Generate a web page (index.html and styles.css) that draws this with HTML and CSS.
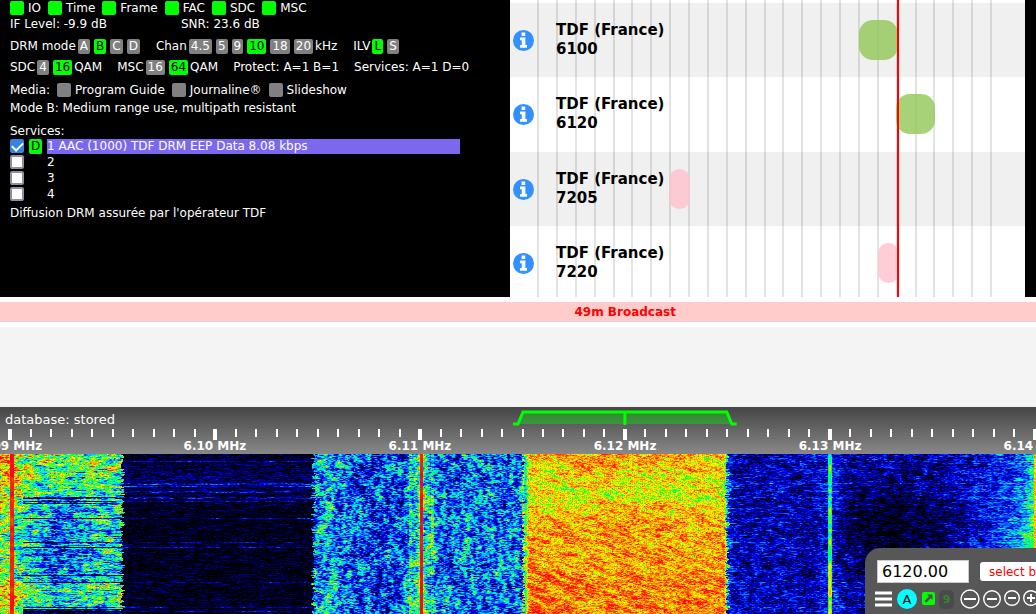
FILE: index.html
```html
<!DOCTYPE html>
<html lang="en">
<head>
<meta charset="utf-8">
<title>DRM receiver</title>
<link rel="stylesheet" href="styles.css">
</head>
<body>
<main class="top">
  <section class="drm" aria-label="DRM decoder">
    <div class="line leds">
      <span class="led on">IO</span><span class="led on">Time</span><span class="led on">Frame</span><span class="led on">FAC</span><span class="led on">SDC</span><span class="led on">MSC</span>
    </div>
    <div class="line levels"><span class="if">IF Level: -9.9 dB</span><span>SNR: 23.6 dB</span></div>
    <div class="line modes">
      <div class="group"><span>DRM mode</span><b class="chip">A</b><b class="chip on">B</b><b class="chip">C</b><b class="chip">D</b></div>
      <div class="group"><span>Chan</span><b class="chip">4.5</b><b class="chip">5</b><b class="chip">9</b><b class="chip on">10</b><b class="chip">18</b><b class="chip">20</b><span class="unit">kHz</span></div>
      <div class="group"><span>ILV</span><b class="chip on">L</b><b class="chip">S</b></div>
    </div>
    <div class="line qam">
      <div class="group"><span>SDC</span><b class="chip">4</b><b class="chip on">16</b><span class="unit">QAM</span></div>
      <div class="group"><span>MSC</span><b class="chip">16</b><b class="chip on">64</b><span class="unit">QAM</span></div>
      <span>Protect: A=1 B=1</span>
      <span>Services: A=1 D=0</span>
    </div>
    <div class="line media"><span>Media:</span><span class="led">Program Guide</span><span class="led">Journaline®</span><span class="led">Slideshow</span></div>
    <div class="line desc">Mode B: Medium range use, multipath resistant</div>
    <div class="line heading">Services:</div>
    <div class="services">
      <label class="service active"><input class="tick" type="checkbox" checked><b class="chip on">D</b><span class="name">1 AAC (1000) TDF DRM EEP Data 8.08 kbps</span></label>
      <label class="service"><input class="tick" type="checkbox"><span class="name">2</span></label>
      <label class="service"><input class="tick" type="checkbox"><span class="name">3</span></label>
      <label class="service"><input class="tick" type="checkbox"><span class="name">4</span></label>
    </div>
    <div class="line message">Diffusion DRM assurée par l'opérateur TDF</div>
  </section>

  <section class="schedule" aria-label="Schedule">
    <svg class="defs" width="0" height="0" aria-hidden="true">
      <symbol id="info" viewBox="0 0 21 21">
        <circle cx="10.500" cy="10.500" r="10.500" fill="#3391ff"/>
        <path fill="#fff" d="M8.600 2.500h3.600v3.400H8.600zM7 7.400h5.400v7.600H14v2.800H7V15h1.800v-4.800H7z"/>
      </symbol>
    </svg>
    <article class="row">
      <div class="track"><span class="slot verified" style="left:70.700%;width:8.700%"></span></div>
      <svg class="info"><use href="#info"/></svg>
      <div class="station">TDF (France)<br>6100</div>
    </article>
    <article class="row">
      <div class="track"><span class="slot verified" style="left:79%;width:8.500%"></span></div>
      <svg class="info"><use href="#info"/></svg>
      <div class="station">TDF (France)<br>6120</div>
    </article>
    <article class="row">
      <div class="track"><span class="slot" style="left:29%;width:4.600%"></span></div>
      <svg class="info"><use href="#info"/></svg>
      <div class="station">TDF (France)<br>7205</div>
    </article>
    <article class="row">
      <div class="track"><span class="slot" style="left:74.900%;width:4.600%"></span></div>
      <svg class="info"><use href="#info"/></svg>
      <div class="station">TDF (France)<br>7220</div>
    </article>
    <div class="hours" aria-hidden="true"><i></i><i></i><i></i><i></i><i></i><i></i><i></i><i></i><i></i><i></i><i></i><i></i><i></i><i></i><i></i><i></i><i></i><i></i><i></i><i></i><i></i><i></i><i></i><i></i><i></i></div>
    <div class="track now-track"><span class="now" style="left:79.200%"></span></div>
  </section>
</main>

<div class="band">49m Broadcast</div>
<div class="labels"></div>

<section class="scale" aria-label="Frequency scale">
  <div class="database">database: stored</div>
  <svg class="ticks" id="ticks" aria-hidden="true"></svg>
  <svg class="passband" viewBox="0 0 224 18" preserveAspectRatio="none" aria-hidden="true">
    <path d="M5 15L11 3H213L219 15z" fill="#00ff00" fill-opacity=".35"/>
    <path d="M0 15H5L10 3H214L219 15H224M112 3V16" fill="none" stroke="#00ff00" stroke-width="3"/>
  </svg>
  <span class="mhz" style="left:1.060%">6.09 MHz</span>
  <span class="mhz" style="left:20.750%">6.10 MHz</span>
  <span class="mhz" style="left:40.540%">6.11 MHz</span>
  <span class="mhz" style="left:60.330%">6.12 MHz</span>
  <span class="mhz" style="left:80.120%">6.13 MHz</span>
  <span class="mhz" style="left:99.900%">6.14 MHz</span>
</section>

<section class="fall">
  <canvas class="waterfall" id="waterfall"></canvas>
  <form class="control">
    <div class="tune">
      <input class="freq" type="text" value="6120.00" aria-label="Frequency">
      <select class="select" aria-label="Band"><option>select band</option></select>
    </div>
    <div class="tools">
      <button class="tool" type="button" aria-label="Menu"><svg width="18" height="16"><path d="M0 2h17M0 8h17M0 14h17" stroke="#fff" stroke-width="3"/></svg></button>
      <button class="tool auto" type="button">A</button>
      <button class="tool" type="button" aria-label="Open"><svg width="14" height="14"><rect x="1" width="13" height="13" rx="2" fill="#0f0"/><path d="M6 2.500h5.500V8L9.700 6.300l-4.400 4.400-1.800-1.800 4.400-4.400z" fill="#505050"/></svg></button>
      <button class="tool nine" type="button">9</button>
      <div class="zooms">
        <button class="tool zoom" type="button" aria-label="Zoom out fully"><svg width="20" height="20" viewBox="0 0 20 20"><circle cx="10" cy="10" r="9"/><path d="M4 10h12"/></svg></button>
        <button class="tool zoom" type="button" aria-label="Zoom to band"><svg width="18" height="18" viewBox="0 0 18 18"><circle cx="9" cy="9" r="8.300"/><path d="M4 9h10"/></svg></button>
        <button class="tool zoom" type="button" aria-label="Zoom out"><svg width="16" height="18" viewBox="0 0 16 18"><circle cx="8" cy="8" r="7.300"/><path d="M4 8h8"/></svg></button>
        <button class="tool zoom" type="button" aria-label="Zoom in"><svg width="16" height="18" viewBox="0 0 16 18"><circle cx="8" cy="8" r="7.300"/><path d="M4 8h8M8 4v8"/></svg></button>
      </div>
    </div>
  </form>
</section>
<script src="script.js"></script>
</body>
</html>
```

FILE: styles.css
```css
* { box-sizing: border-box; }

body {
  margin: 0;
  min-height: 100vh;
  display: flex;
  flex-direction: column;
  overflow-x: hidden;
  background: #fff;
  font-family: "DejaVu Sans", Verdana, sans-serif;
  font-size: 12px;
}

.top {
  display: grid;
  grid-template-columns: 510fr 515fr;
  padding-right: 11px;
  background: #000;
}

/* decoder panel */
.drm { padding: 0 10px; color: #fff; min-width: 0; }
.line { display: flex; align-items: center; line-height: 16px; white-space: nowrap; }
.leds { gap: 7px; }
.led { display: flex; align-items: center; gap: 4px; }
.led::before { content: ""; width: 14px; height: 14px; border-radius: 2px; background: #808080; }
.led.on::before { background: #00ff00; }
.if { width: 171px; }
.modes { margin-top: 6px; gap: 16px; }
.qam { margin-top: 5px; gap: 15px; }
.media { margin-top: 7px; gap: 7px; }
.desc { margin-top: 2px; }
.heading { margin-top: 7px; }
.message { margin-top: 3px; }
.group { display: flex; align-items: center; gap: 4px; }
.group > span:first-child { margin-right: -2px; }
.unit { margin-left: -2px; }
.chip {
  padding: 0 2px;
  border-radius: 2px;
  background: #808080;
  color: #fff;
  font-weight: 400;
  line-height: 15px;
}
.chip.on { background: #00ff00; color: #000; }
.services { display: grid; gap: 1px; padding-right: 40px; }
.service {
  display: grid;
  grid-template-columns: 14px 13px 1fr;
  column-gap: 5px;
  height: 15px;
  line-height: 15px;
}
.service .chip { text-align: center; }
.name { grid-column: 3; }
.active .name { background: #7b68ee; }
.tick {
  appearance: none;
  display: grid;
  place-items: center;
  width: 14px;
  height: 14px;
  margin: 0;
  border: 2px solid #8f8f9d;
  border-radius: 2px;
  background: #fff;
}
.tick:checked { border-color: #3584e4; background: #3584e4; }
.tick:checked::after {
  content: "";
  width: 9px;
  height: 5px;
  border: solid #fff;
  border-width: 0 0 2px 2px;
  transform: translateY(-1px) rotate(-45deg);
}

/* schedule */
.schedule {
  position: relative;
  height: 297px;
  padding-top: 3px;
  overflow: hidden;
  background: #fff;
}
.row {
  position: relative;
  display: flex;
  align-items: center;
  gap: 22px;
  height: 74px;
  padding-left: 3px;
}
.row:nth-of-type(odd) { background: #f0f0f0; }
.row:nth-of-type(even) { margin-bottom: 1px; }
.defs { position: absolute; }
.info { width: 21px; height: 21px; }
.station { position: relative; z-index: 2; font-size: 15px; font-weight: 700; line-height: 19px; }
.track { position: absolute; inset: 0 33px 0 27px; }
.slot { position: absolute; top: 17px; height: 40px; border-radius: 14px; background: #ffc0cb; opacity: .8; z-index: 1; }
.slot.verified { background: #92c755; }
.hours { position: absolute; inset: 0 33px 0 27px; display: flex; justify-content: space-between; }
.hours i { width: 2px; background: rgba(0, 0, 0, .11); }
.now { position: absolute; z-index: 3; top: 0; bottom: 0; width: 2px; background: #f00; }

/* band bars */
.band {
  margin: 5px 0;
  padding-left: 20.7%;
  background: #ffcbcb;
  color: #f00;
  font-size: 12px;
  font-weight: 700;
  line-height: 20px;
  text-align: center;
}
.labels { height: 80px; background: #f4f4f4; }

/* frequency scale */
.scale {
  position: relative;
  height: 47px;
  overflow: hidden;
  background: linear-gradient(#454545, #888);
  color: #fff;
}
.database { padding: 5px; font-size: 13px; line-height: 16px; }
.ticks { position: absolute; top: 22px; left: 0; width: 100%; height: 12px; }
.passband { position: absolute; top: 2px; left: 49.5%; width: 21.6%; height: 18px; }
.mhz {
  position: absolute;
  bottom: 0;
  transform: translateX(-50%);
  font-weight: 700;
  line-height: 15px;
  white-space: nowrap;
}

/* waterfall */
.fall { position: relative; flex: 1; min-height: 160px; overflow: hidden; background: #000; }
.waterfall { position: absolute; width: 100%; height: 100%; }

/* receiver controls */
.control {
  position: absolute;
  right: 0;
  bottom: 0;
  width: 171px;
  height: 66px;
  padding: 12px 0 0 10px;
  overflow: hidden;
  border-top-left-radius: 15px;
  background: #575757;
}
.tune { display: flex; align-items: center; gap: 11px; padding-left: 2px; }
.freq {
  flex: none;
  width: 92px;
  height: 23px;
  padding: 0 4px;
  border: 1px solid #ccc;
  background: #fff;
  color: #000;
  font: 16px "DejaVu Sans", sans-serif;
}
.select {
  flex: none;
  appearance: none;
  width: 96px;
  height: 19px;
  padding: 0 9px;
  border: 0;
  border-radius: 3px;
  background: #fff;
  color: #f00;
  font: 12px "DejaVu Sans", sans-serif;
}
.tools { display: flex; align-items: center; gap: 4px; margin-top: 6px; }
.tool { flex: none; display: grid; place-items: center; padding: 0; border: 0; background: none; color: #000; font: 13px "DejaVu Sans", sans-serif; }
.auto { width: 20px; height: 20px; border-radius: 50%; background: #00ffff; }
.nine { width: 15px; height: 19px; border-radius: 5px; background: #4a4a4a; color: #3a803a; font-size: 11px; font-weight: 700; }
.zooms { flex: none; display: flex; align-items: center; gap: 3px; padding-left: 2px; }
.zoom { fill: none; stroke: #fff; stroke-width: 2px; }
.zoom circle { stroke-width: 1.4; }
```

FILE: script.js
```javascript
const SPAN = 1036;
const FIRST = 10.4;
const STEP = 204.85;

function drawTicks() {
  const svg = document.getElementById('ticks');
  for (let i = 0; i <= 50; i++) {
    const major = i % 10 === 0;
    const w = major ? 4 : 2;
    const r = document.createElementNS('http://www.w3.org/2000/svg', 'rect');
    r.setAttribute('x', ((FIRST + i * STEP / 10 - w / 2) / SPAN * 100) + '%');
    r.setAttribute('width', w);
    r.setAttribute('height', major ? 11 : 8);
    r.setAttribute('fill', '#fff');
    r.setAttribute('shape-rendering', 'crispEdges');
    svg.appendChild(r);
  }
}

function hash(x, y, s) {
  let h = Math.imul(x, 374761393) + Math.imul(y, 668265263) + Math.imul(s, 974634777);
  h = Math.imul(h ^ (h >>> 13), 1274126177);
  h = Math.imul(h ^ (h >>> 15), 2246822519);
  return ((h ^ (h >>> 16)) >>> 0) / 4294967296;
}

// smooth noise, centred on zero
function noise(x, y, sx, sy, s) {
  const u = x / sx, v = y / sy;
  const i = Math.floor(u), j = Math.floor(v);
  const a = u - i, b = v - j;
  const top = hash(i, j, s) * (1 - a) + hash(i + 1, j, s) * a;
  const low = hash(i, j + 1, s) * (1 - a) + hash(i + 1, j + 1, s) * a;
  return top * (1 - b) + low * b - 0.5;
}

const STOPS = [
  [0, 0, 0, 0], [0.14, 0, 0, 80], [0.28, 0, 0, 245], [0.42, 0, 130, 255],
  [0.52, 0, 245, 240], [0.62, 20, 255, 30], [0.74, 250, 250, 0],
  [0.86, 255, 130, 0], [0.95, 255, 40, 0], [1, 255, 0, 45]
];

function colour(v) {
  v = Math.max(0, Math.min(1, v));
  let k = 1;
  while (v > STOPS[k][0]) k++;
  const p = STOPS[k - 1], q = STOPS[k], t = (v - p[0]) / (q[0] - p[0]);
  return [1, 2, 3].map(n => p[n] + (q[n] - p[n]) * t);
}

const bump = (d, w) => Math.exp(-d * d / (w * w));

function level(x, y) {
  const grain = noise(x, y, 2, 1, 1);
  const streak = noise(x, y, 9, 1, 2);
  const blob = noise(x, y, 5, 4, 3);
  const row = hash(0, y, 4);
  const edge = x + (hash(1, y, 5) - 0.5) * 5;
  let v;
  if (edge < 122) {
    v = 0.54 + 0.1 * bump(y - 10, 38) + 0.12 * bump(y - 141, 12) - 0.04 * bump(y - 95, 35);
    v -= 0.12 * bump(x - 60, 32) * (1 - bump(y - 10, 20));
    v += 0.16 * bump(x, 24) + grain * 0.36 + streak * 0.3 + blob * 0.32;
    if (row > 0.88 && y > 42 && x > 22) v -= 0.35;
    if (y > 154 && x > 22) v -= 0.4;
  } else if (edge < 313) {
    v = 0.05 + grain * 0.22 + streak * 0.18 + 0.08 * bump(y - 25, 18);
    if (row > 0.9) v += 0.13 + streak * 0.1;
  } else if (x < 525 - (hash(3, y, 5) * 4)) {
    const d = Math.abs(x - 421);
    v = 0.39 + grain * 0.4 + noise(x, y, 3, 3, 3) * 0.32 + noise(x, y, 4, 13, 6) * 0.24;
    v += 0.24 * bump(d, 10) + 0.06 * bump(x - 325, 15) - 0.05 * bump(x - 385, 30);
    if (Math.abs(d - 11) < 2) v += 0.1;
  } else if (edge < 727) {
    v = 0.83 + grain * 0.24 + noise(x - y * 1.7, y, 7, 4, 7) * 0.2;
    v += noise(x, y, 1, 1, 8) * 0.1 - 0.09 * bump(y - 36, 25) + 0.03 * bump(y - 150, 45);
    v -= 0.25 * bump(x - 525, 2) + 0.25 * bump(x - 727, 2);
  } else {
    v = 0.22 + grain * 0.28 + streak * 0.16 + blob * 0.18;
    v -= 0.19 * bump(x - 895, 55) * bump(y - 75, 48);
    v += 0.1 * bump(x - 830, 11) + 0.1 * bump(x - 727, 5);
    v += 0.2 * bump(x - 1028, 45) * (0.5 + 0.5 * bump(y - 90, 55)) + 0.22 * bump(x - 1036, 12);
    if (row > 0.92) v += 0.06;
  }
  if (Math.abs(x - 11.5) < 2) v = 0.97 + noise(x, y, 4, 5, 9) * 0.12;
  if (Math.abs(x - 421) < 2) v = 0.99 + noise(x, y, 4, 5, 9) * 0.1;
  const carrier = Math.abs(x - 829.5);
  if (carrier < 2) v = 0.6 + blob * 0.3 + 0.14 * bump(y - 130, 40) - (carrier > 1 ? 0.08 : 0);
  if (x > 1033) v = 0.78 + grain * 0.2;
  return v;
}

function drawWaterfall() {
  const canvas = document.getElementById('waterfall');
  const w = canvas.width = canvas.clientWidth;
  const h = canvas.height = canvas.clientHeight;
  const ctx = canvas.getContext('2d');
  const image = ctx.createImageData(w, h);
  for (let y = 0, o = 0; y < h; y++) {
    for (let x = 0; x < w; x++, o += 4) {
      const c = colour(level(x * SPAN / w, y));
      image.data[o] = c[0];
      image.data[o + 1] = c[1];
      image.data[o + 2] = c[2];
      image.data[o + 3] = 255;
    }
  }
  ctx.putImageData(image, 0, 0);
}

drawTicks();
drawWaterfall();
window.addEventListener('resize', drawWaterfall);
```
